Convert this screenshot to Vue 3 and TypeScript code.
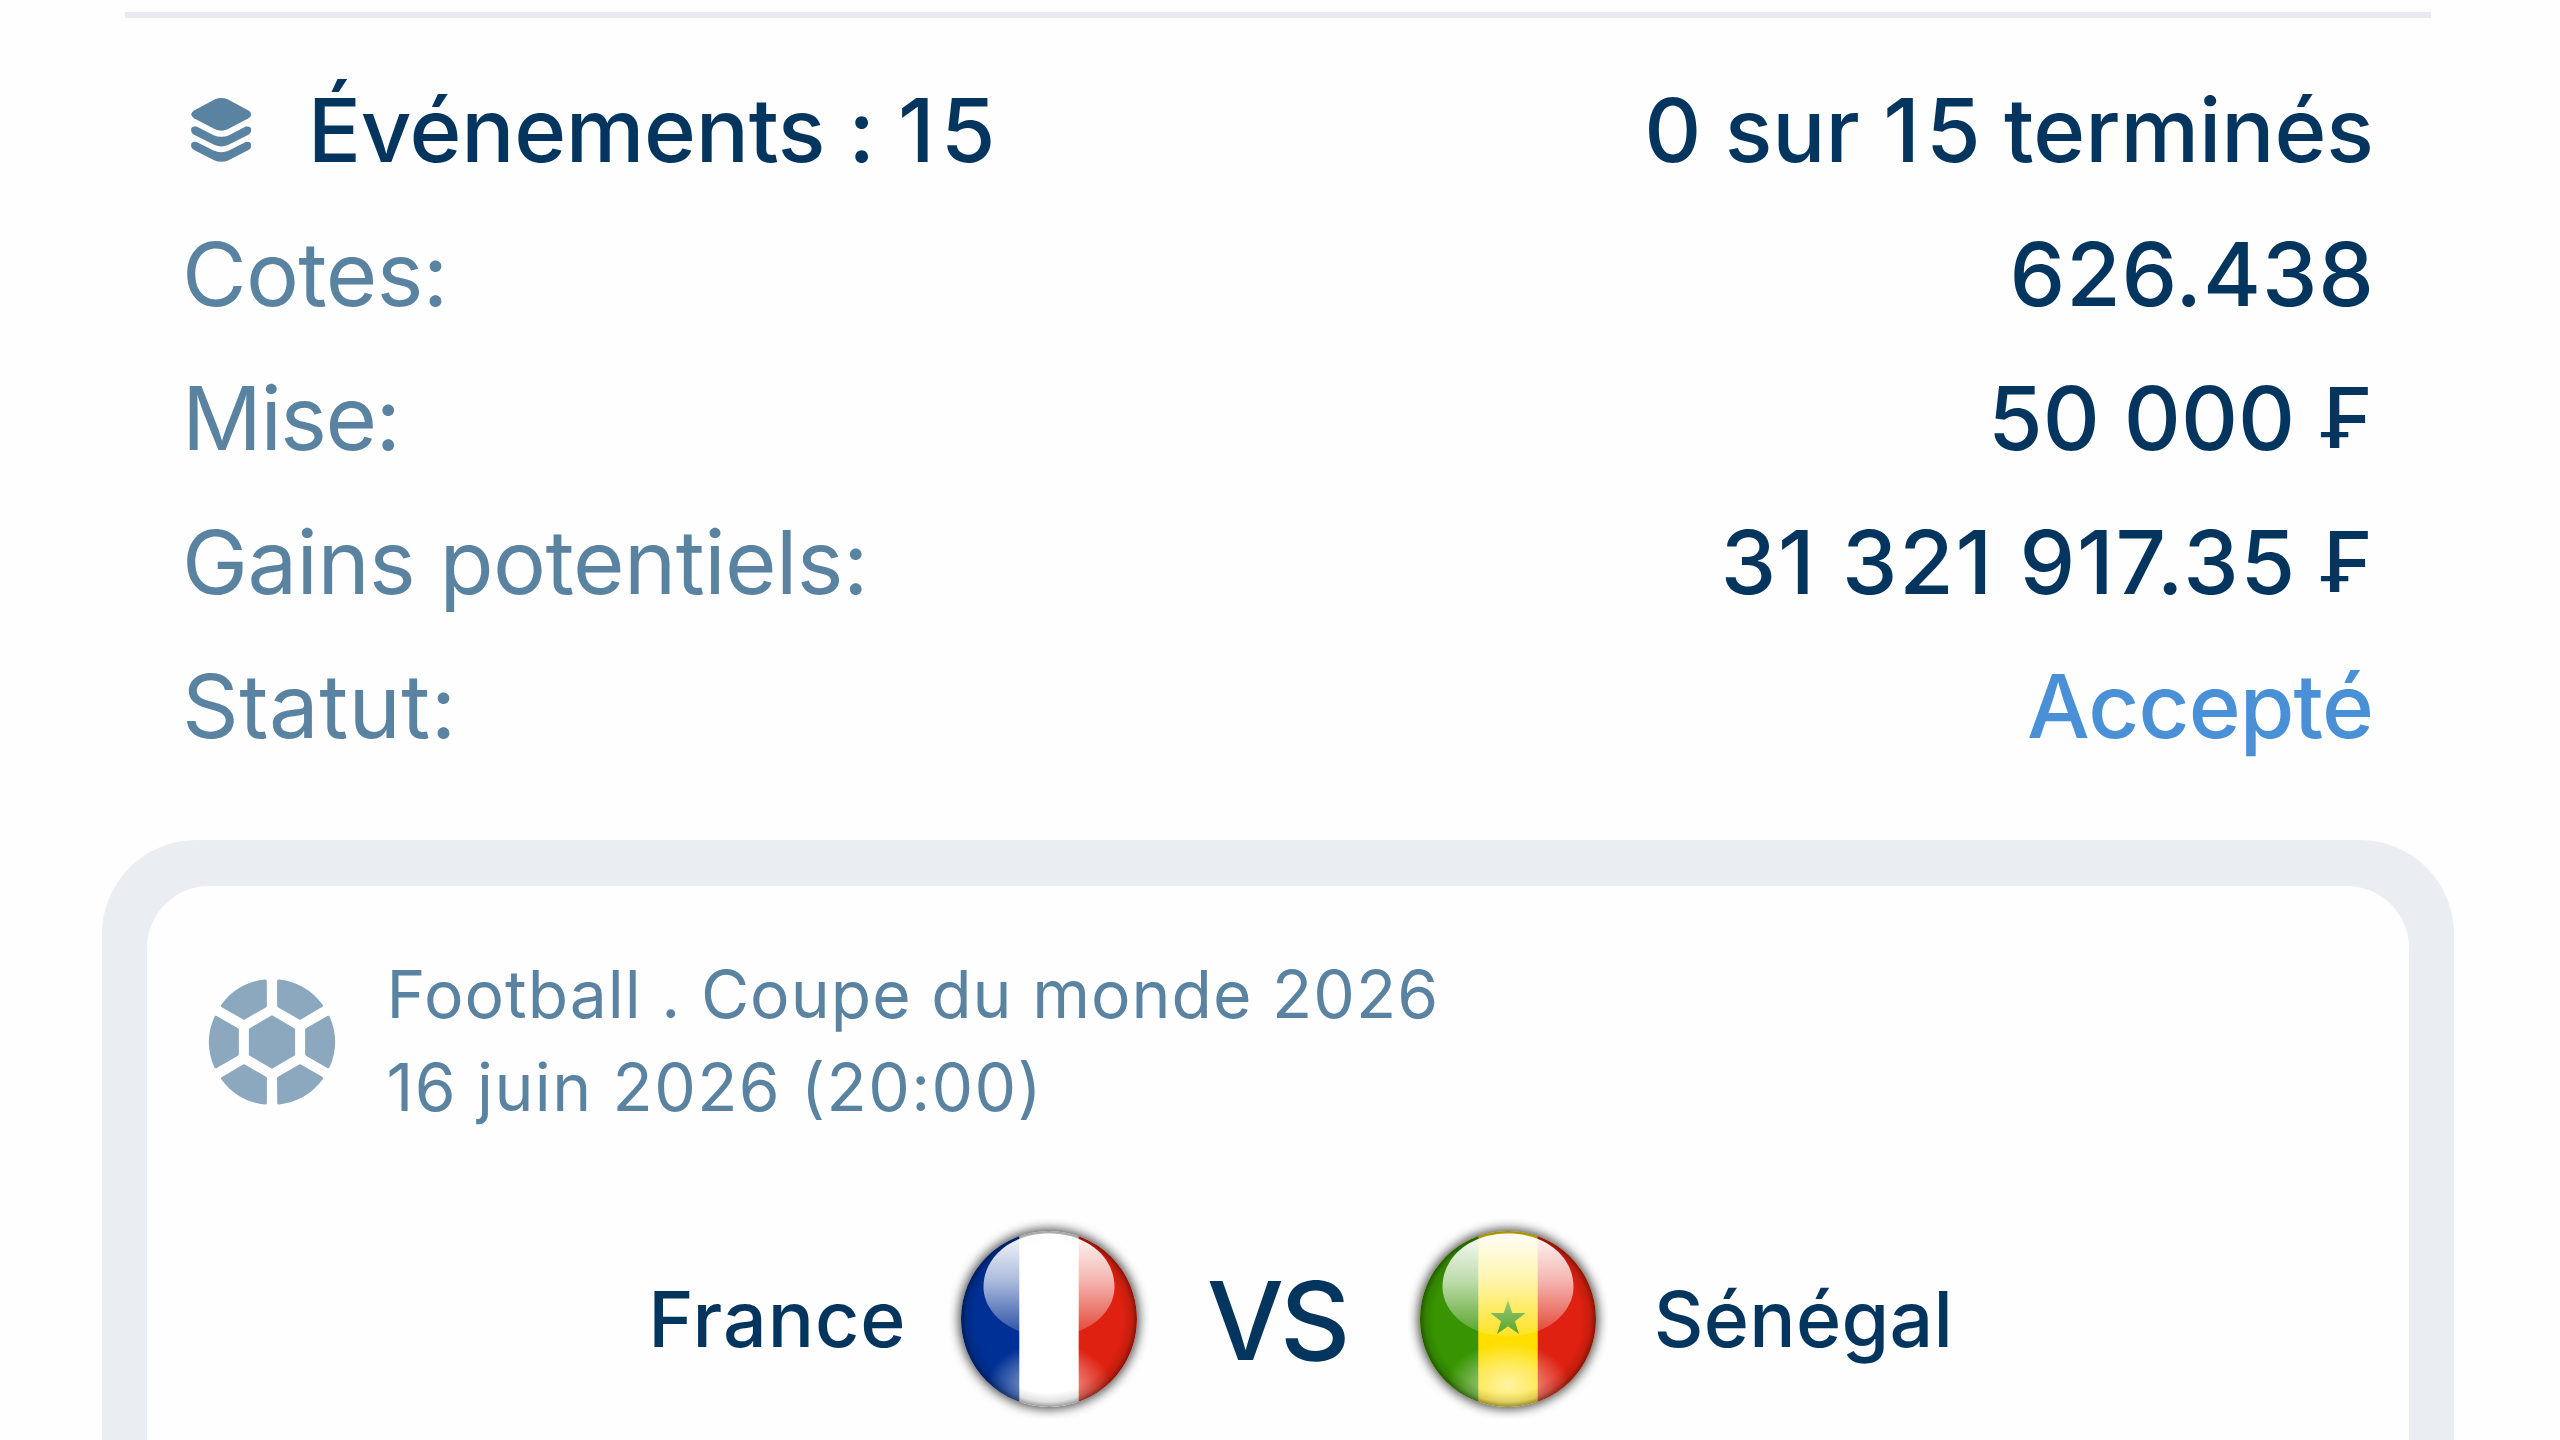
<script setup lang="ts">
interface SummaryRow {
  label: string
  value: string
  labelSpacing: number
  valueSpacing: number
  currency?: boolean
  tone?: 'link'
  icon?: boolean
}

interface Team {
  id: string
  stripes: [string, string, string]
  star: boolean
}

const rows: SummaryRow[] = [
  { label: 'Événements : 15', value: '0 sur 15 terminés', labelSpacing: -0.33, valueSpacing: -0.07, icon: true },
  { label: 'Cotes:', value: '626.438', labelSpacing: -0.68, valueSpacing: 0.85 },
  { label: 'Mise:', value: '50 000', labelSpacing: -1.55, valueSpacing: 0.1, currency: true },
  { label: 'Gains potentiels:', value: '31 321 917.35', labelSpacing: -0.59, valueSpacing: 1.8, currency: true },
  { label: 'Statut:', value: 'Accepté', labelSpacing: 0.43, valueSpacing: -0.86, tone: 'link' },
]

const france: Team = { id: 'fr', stripes: ['#003096', '#ffffff', '#de2110'], star: false }
const senegal: Team = { id: 'sn', stripes: ['#389400', '#ffde00', '#de2110'], star: true }
const teams = [france, senegal]
const panels = [0, 60, 120, 180, 240, 300]

// Isolates the 1 of "15" so that it can be set a little wider than its kerned width.
const parts = (text: string): string[] => text.split(/(1(?=5))/)
</script>

<template>
  <main class="page">
    <hr class="divider" />

    <section class="summary">
      <div v-for="row in rows" :key="row.label" class="row">
        <div class="label" :class="{ strong: row.icon }">
          <svg v-if="row.icon" class="layers" viewBox="0 0 60.3 65" aria-hidden="true">
            <path d="M24 1.3Q30.3-1.3 36.6 1.3L57.5 12.4Q63 16.3 57.5 20.3L36.6 31.3Q30.3 34 24 31.3L3 20.3Q-2.5 16.3 3 12.4Z" />
            <path d="M5.6 28.6L22.6 37.2Q30.3 40.4 38 37.2L54.7 28.6Q60.3 27.6 60.3 32Q60.3 35 57.5 36.7L37 47Q30.3 49.8 23.6 47L3 36.7Q0 35 0 32Q0 27.6 5.6 28.6Z" />
            <path d="M5.6 44L22.6 52.6Q30.3 55.8 38 52.6L54.7 44Q60.3 43 60.3 47.4Q60.3 50.4 57.5 52.1L37 62.4Q30.3 65.2 23.6 62.4L3 52.1Q0 50.4 0 47.4Q0 43 5.6 44Z" />
          </svg>
          <span :style="{ letterSpacing: row.labelSpacing + 'px' }"
            ><span v-for="(part, i) in parts(row.label)" :key="i" :class="{ wide: part === '1' }">{{ part }}</span></span
          >
        </div>
        <div class="value" :class="row.tone">
          <span :style="{ letterSpacing: row.valueSpacing + 'px', marginRight: -row.valueSpacing + 'px' }"
            ><span v-for="(part, i) in parts(row.value)" :key="i" :class="{ wide: part === '1' }">{{ part }}</span></span
          >
          <span v-if="row.currency" class="currency">₣</span>
        </div>
      </div>
    </section>

    <div class="frame">
      <article class="card">
        <header class="head">
          <svg class="ball" viewBox="-66 -66 132 132" aria-hidden="true">
            <path d="M0-24.8L21.4-12.4V12.4L0 24.8L-21.4 12.4V-12.4Z" />
            <path
              v-for="angle in panels"
              :key="angle"
              :transform="`rotate(${angle})`"
              d="M6.8-60.9A61.3 61.3 0 0 1 49.2-36.4L28-24L6.8-36.3Z"
            />
          </svg>
          <div class="meta">
            <div class="league">Football . Coupe du monde 2026</div>
            <div class="date">16 juin 2026 (20:00)</div>
          </div>
        </header>

        <div class="match">
          <span class="team home">France</span>
          <template v-for="team in teams" :key="team.id">
            <svg class="flag" viewBox="-100 -100 200 200" aria-hidden="true">
              <defs>
                <clipPath :id="team.id + '-clip'"><circle r="88" /></clipPath>
                <filter :id="team.id + '-soft'" x="-20%" y="-20%" width="140%" height="140%">
                  <feGaussianBlur stdDeviation="5.5" />
                </filter>
                <linearGradient :id="team.id + '-gloss'" x1="0" y1="0" x2="0" y2="1">
                  <stop offset="0" stop-color="#fff" stop-opacity="0.97" />
                  <stop offset="0.45" stop-color="#fff" stop-opacity="0.68" />
                  <stop offset="1" stop-color="#fff" stop-opacity="0.14" />
                </linearGradient>
                <radialGradient :id="team.id + '-glow'">
                  <stop offset="0" stop-color="#fff" stop-opacity="0.64" />
                  <stop offset="0.5" stop-color="#fff" stop-opacity="0.36" />
                  <stop offset="1" stop-color="#fff" stop-opacity="0" />
                </radialGradient>
                <radialGradient :id="team.id + '-rim'" gradientUnits="userSpaceOnUse" cx="0" cy="0" r="88">
                  <stop offset="0.84" stop-color="#000" stop-opacity="0" />
                  <stop offset="0.94" stop-color="#000" stop-opacity="0.12" />
                  <stop offset="1" stop-color="#000" stop-opacity="0.4" />
                </radialGradient>
              </defs>
              <circle r="90" fill="#000" fill-opacity="0.72" :filter="`url(#${team.id}-soft)`" />
              <g :clip-path="`url(#${team.id}-clip)`">
                <rect x="-90" y="-90" width="180" height="180" :fill="team.stripes[1]" />
                <rect x="-90" y="-90" width="60.3" height="180" :fill="team.stripes[0]" />
                <rect x="29.7" y="-90" width="60.3" height="180" :fill="team.stripes[2]" />
                <path
                  v-if="team.star"
                  fill="#389400"
                  d="M0-18.5L4.3-5.9H17.6L7 2.2L10.9 15L0 7.3L-10.9 15L-7 2.2L-17.6-5.9H-4.3Z"
                />
                <ellipse cx="0" cy="66" rx="62" ry="42" :fill="`url(#${team.id}-glow)`" />
                <circle r="88" :fill="`url(#${team.id}-rim)`" />
                <path
                  d="M0-85.5C38-85.5 65.5-62 65.5-32C65.5-6 38 17.5 0 17.5C-38 17.5-65.5-6-65.5-32C-65.5-62-38-85.5 0-85.5Z"
                  :fill="`url(#${team.id}-gloss)`"
                />
              </g>
            </svg>
            <span v-if="team.id === 'fr'" class="versus">VS</span>
          </template>
          <span class="team away">Sénégal</span>
        </div>
      </article>
    </div>
  </main>
</template>

<style>
body {
  margin: 0;
  background: #fefefe;
}
</style>

<style scoped>
.page {
  box-sizing: border-box;
  width: 2560px;
  height: 1440px;
  padding-top: 12px;
  overflow: hidden;
  background: #fefefe;
  color: #03355f;
  font-family: Inter, 'Noto Sans', sans-serif;
  white-space: nowrap;
}

.divider {
  height: 6px;
  margin: 0 129px 0 125px;
  border: 0;
  background: #e7eaf0;
}

.summary {
  padding: 40px 186px 62px 182px;
}

.row {
  display: flex;
  justify-content: space-between;
  height: 144px;
  font-size: 88.5px;
  line-height: 144px;
}

.label {
  display: flex;
  align-items: center;
  color: #5a83a2;
}

.label.strong {
  color: #03355f;
  font-weight: 500;
}

.layers {
  width: 60.3px;
  height: 65px;
  margin: 0 56.4px 0 9px;
  fill: #5a83a2;
}

.value {
  display: flex;
  font-weight: 500;
}

.value.link {
  color: #4a90d6;
}

.wide {
  letter-spacing: 6px;
}

.currency {
  margin: 0 1.5px 0 26.5px;
  font-size: 83.6px;
}

.frame {
  height: 700px;
  margin: 0 106.5px 0 102px;
  padding: 45.5px 45px 0 45.3px;
  border-radius: 94px;
  background: #eaedf2;
}

.card {
  box-sizing: border-box;
  height: 700px;
  padding: 63px 0 0 59px;
  border-radius: 62px;
  background: #fefefe;
}

.head {
  display: flex;
  align-items: center;
  height: 186px;
  gap: 48.3px;
}

.ball {
  width: 132px;
  height: 132px;
  fill: #8ba8be;
  stroke: #8ba8be;
  stroke-width: 3.4px;
  stroke-linejoin: round;
}

.meta {
  padding-bottom: 1.6px;
  color: #5a83a2;
  font-size: 66px;
  line-height: 92.3px;
}

.league {
  letter-spacing: 1px;
}

.date {
  letter-spacing: 1.38px;
}

.match {
  display: flex;
  align-items: center;
  margin-top: 84px;
  font-weight: 500;
}

.team {
  font-size: 77px;
}

.home {
  width: 301px;
  margin-left: 442px;
  letter-spacing: 0.94px;
}

.flag {
  flex: none;
  width: 200px;
  height: 200px;
}

.versus {
  width: 201px;
  margin: 3px 0 0 57.5px;
  font-size: 109px;
  letter-spacing: -4px;
}

.away {
  margin-left: 46px;
  letter-spacing: 0.27px;
}
</style>
